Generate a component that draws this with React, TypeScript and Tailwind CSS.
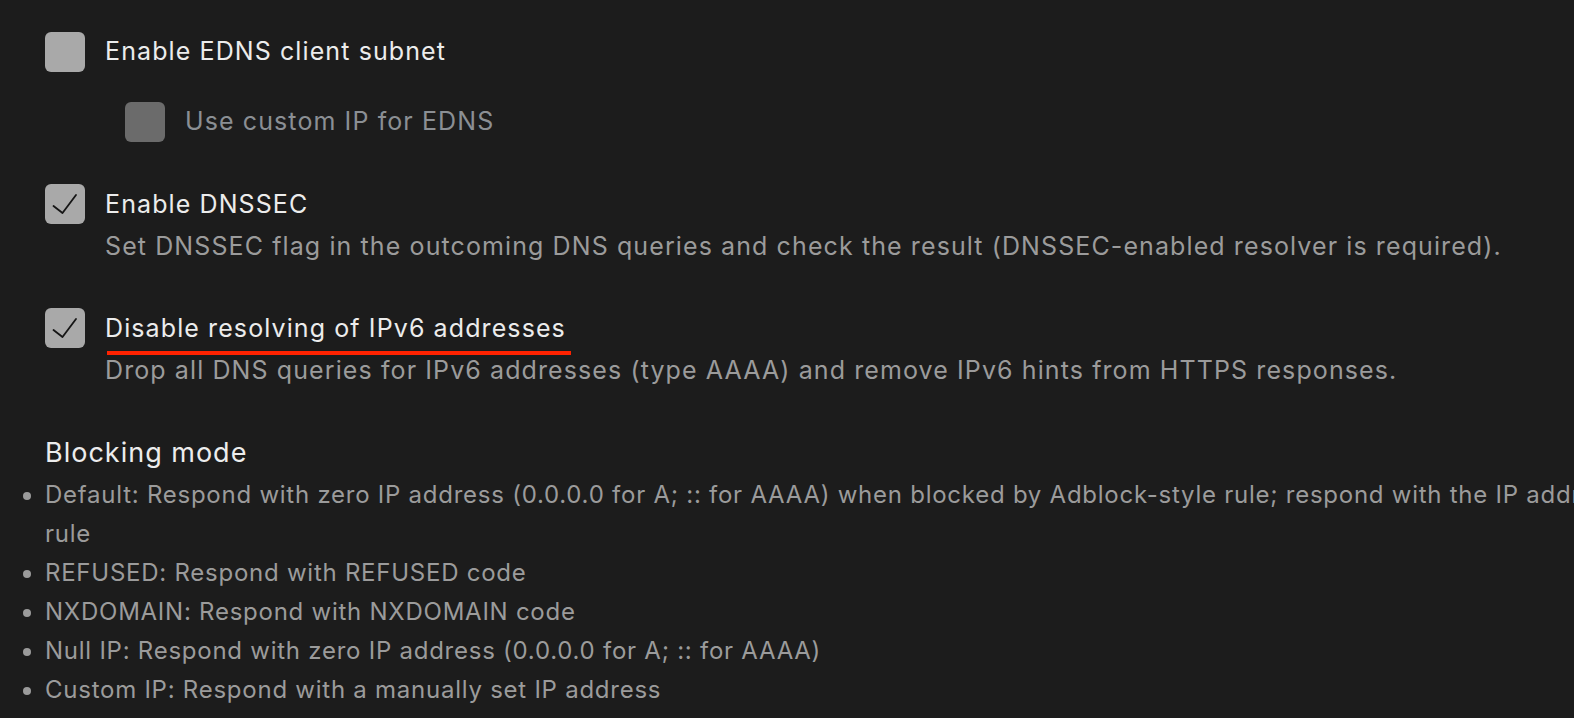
import type { ReactElement } from "react";

function Check(): ReactElement {
  return (
    <svg viewBox="0 0 40 40" className="w-10 h-10" fill="none">
      <path d="M8.5 22 L17.5 29 L31 11" stroke="#151515" strokeWidth="1.8" strokeLinecap="round" strokeLinejoin="round" />
    </svg>
  );
}

function Box({ checked, disabled }: { checked?: boolean; disabled?: boolean }): ReactElement {
  return (
    <div
      className={
        disabled
          ? "w-10 h-10 shrink-0 rounded-md bg-[#6b6b6b]"
          : "w-10 h-10 shrink-0 rounded-md bg-[#a9a9a9]"
      }
    >
      {checked && <Check />}
    </div>
  );
}

const modes = [
  "REFUSED: Respond with REFUSED code",
  "NXDOMAIN: Respond with NXDOMAIN code",
  "Null IP: Respond with zero IP address (0.0.0.0 for A; :: for AAAA)",
  "Custom IP: Respond with a manually set IP address",
];

export default function App(): ReactElement {
  return (
    <div className="w-[1574px] h-[718px] overflow-hidden bg-[#1c1c1c] font-['Inter',sans-serif]">
      <div className="pl-[45px] pt-8">
        {/* EDNS */}
        <div className="flex items-center gap-5">
          <Box />
          <span className="text-[25px] tracking-[1.1px] text-[#ececec]">Enable EDNS client subnet</span>
        </div>
        <div className="flex items-center gap-5 ml-20 mt-[30px]">
          <Box disabled />
          <span className="text-[25px] tracking-[1.1px] text-[#8b8f94]">Use custom IP for EDNS</span>
        </div>

        {/* DNSSEC */}
        <div className="flex gap-5 mt-[42px]">
          <Box checked />
          <div className="flex flex-col">
            <span className="text-[25px] tracking-[1.1px] leading-10 text-[#ececec]">Enable DNSSEC</span>
            <span className="text-[25px] tracking-[1.1px] leading-[42px] text-[#9b9b9b] mt-px">
              Set DNSSEC flag in the outcoming DNS queries and check the result (DNSSEC-enabled resolver is required).
            </span>
          </div>
        </div>

        {/* IPv6 */}
        <div className="flex gap-5 mt-[41px]">
          <Box checked />
          <div className="flex flex-col">
            <span className="text-[25px] tracking-[1.1px] leading-10 text-[#ececec] relative self-start">
              Disable resolving of IPv6 addresses
              <span className="absolute left-[2px] w-[464px] top-[43px] h-[4px] bg-[#ff2200]" />
            </span>
            <span className="text-[25px] tracking-[1.1px] leading-[42px] text-[#9b9b9b] mt-px">
              Drop all DNS queries for IPv6 addresses (type AAAA) and remove IPv6 hints from HTTPS responses.
            </span>
          </div>
        </div>

        {/* Blocking mode */}
        <h3 className="text-[27px] tracking-[1px] text-[#ececec] mt-[42px] leading-10">Blocking mode</h3>
        <ul className="list-disc w-max mt-[2px] marker:text-[#9b9b9b]">
          <li className="text-[24px] tracking-[0.75px] leading-[39px] text-[#9b9b9b]">
            Default: Respond with zero IP address (0.0.0.0 for A; :: for AAAA) when blocked by Adblock-style rule; respond
            with the IP address specified in the rule when blocked by /etc/hosts-style
            <br />
            rule
          </li>
          {modes.map((m) => (
            <li key={m} className="text-[24px] tracking-[0.75px] leading-[39px] text-[#9b9b9b]">
              {m}
            </li>
          ))}
        </ul>
      </div>
    </div>
  );
}
